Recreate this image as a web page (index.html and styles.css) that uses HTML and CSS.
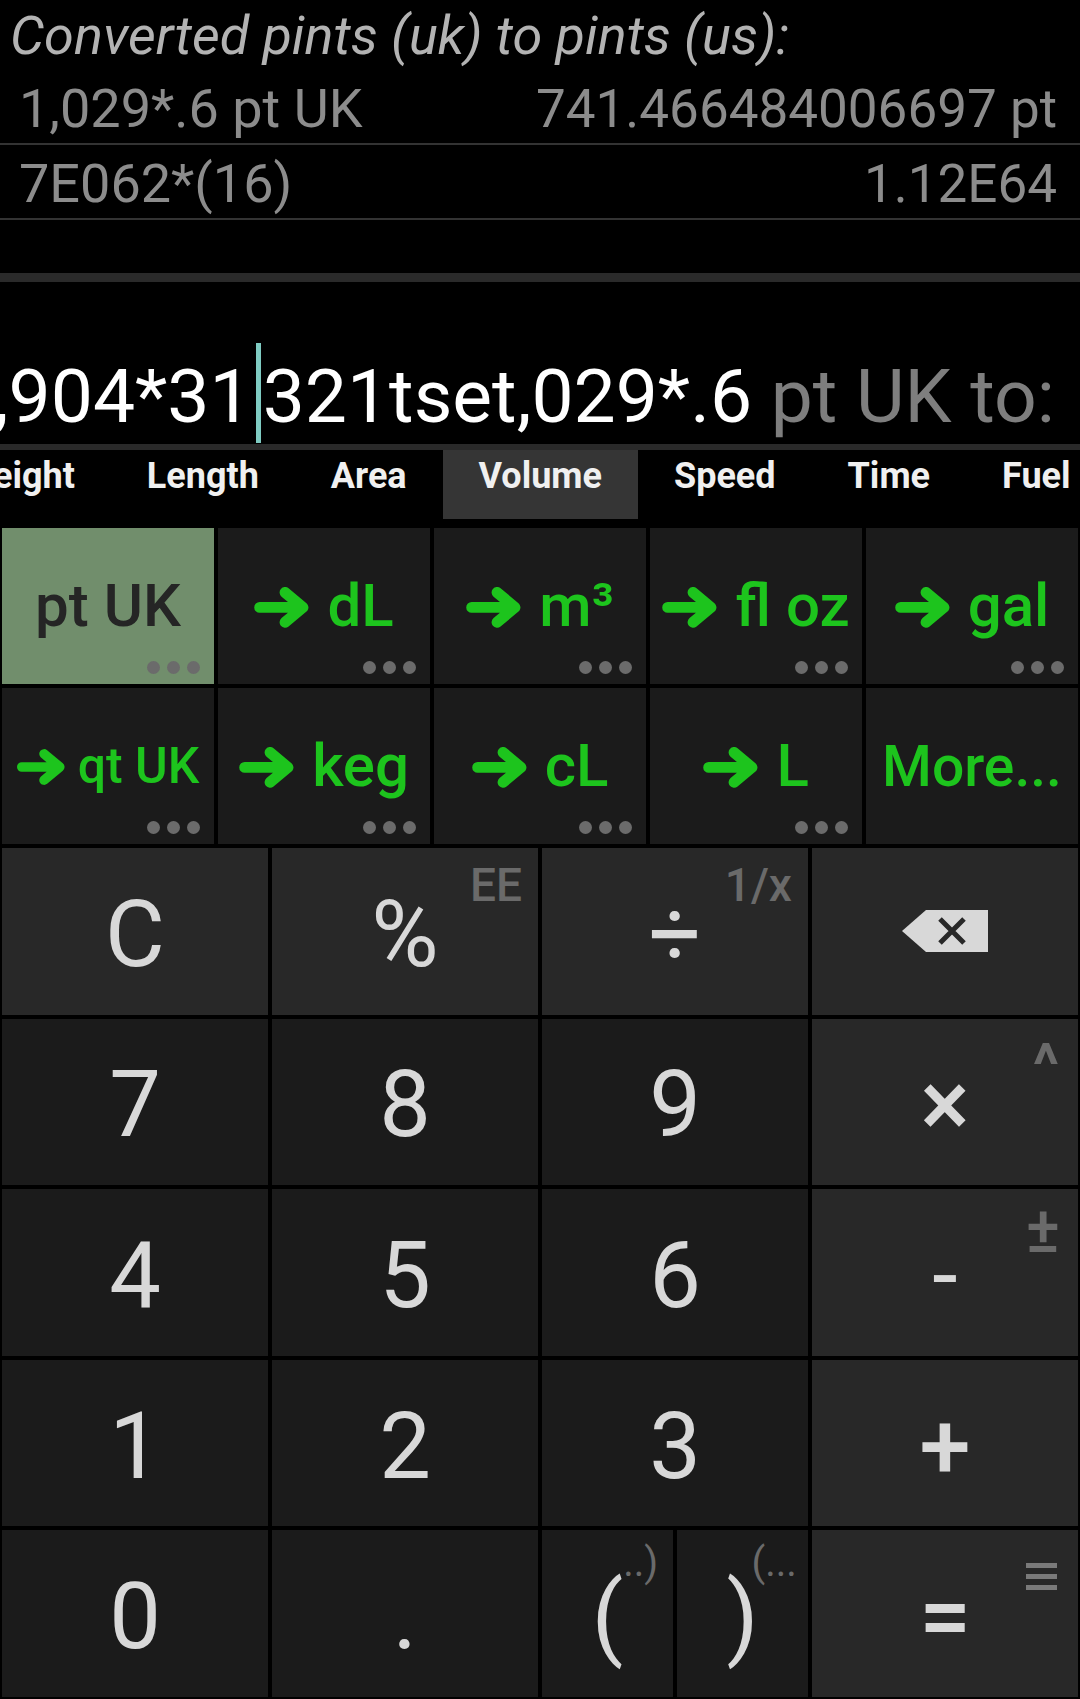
FILE: index.html
```html
<!DOCTYPE html>
<html lang="en">
<head>
<meta charset="utf-8">
<title>Unit converter calculator</title>
<link rel="stylesheet" href="styles.css">
</head>
<body>
<div class="app">
  <section class="history">
    <div class="hist-title">Converted pints (uk) to pints (us):</div>
    <div class="hist-row"><span>1,029*.6 pt UK</span><span class="hist-result">741.466484006697 pt</span></div>
    <div class="hist-row"><span>7E062*(16)</span><span class="hist-result">1.12E64</span></div>
    <div class="hist-spacer"></div>
  </section>
  <div class="bar bar-top"></div>
  <div class="input">
    <div class="input-line">,904*31<span class="caret"></span>321tset,029*.6 <span class="unit-hint">pt UK to:</span></div>
  </div>
  <div class="bar bar-bottom"></div>
  <nav class="tabs">
    <div class="tab-strip">
      <span class="tab">Weight</span>
      <span class="tab">Length</span>
      <span class="tab">Area</span>
      <span class="tab tab-active">Volume</span>
      <span class="tab">Speed</span>
      <span class="tab">Time</span>
      <span class="tab">Fuel Economy</span>
    </div>
  </nav>
  <div class="units">
    <div class="unit unit-sel"><span class="unit-label">pt UK</span><span class="dots"><i></i><i></i><i></i></span></div>
    <div class="unit"><span class="unit-label"><svg class="arrow" viewBox="0 0 55 41"><path d="M5.5 20.5H47M31 5.5L49 20.5L31 35.5"/></svg>dL</span><span class="dots"><i></i><i></i><i></i></span></div>
    <div class="unit"><span class="unit-label"><svg class="arrow" viewBox="0 0 55 41"><path d="M5.5 20.5H47M31 5.5L49 20.5L31 35.5"/></svg>m³</span><span class="dots"><i></i><i></i><i></i></span></div>
    <div class="unit"><span class="unit-label"><svg class="arrow" viewBox="0 0 55 41"><path d="M5.5 20.5H47M31 5.5L49 20.5L31 35.5"/></svg>fl oz</span><span class="dots"><i></i><i></i><i></i></span></div>
    <div class="unit"><span class="unit-label"><svg class="arrow" viewBox="0 0 55 41"><path d="M5.5 20.5H47M31 5.5L49 20.5L31 35.5"/></svg>gal</span><span class="dots"><i></i><i></i><i></i></span></div>
    <div class="unit"><span class="unit-label unit-small"><svg class="arrow" viewBox="0 0 55 41"><path d="M5.5 20.5H47M31 5.5L49 20.5L31 35.5"/></svg>qt UK</span><span class="dots"><i></i><i></i><i></i></span></div>
    <div class="unit"><span class="unit-label"><svg class="arrow" viewBox="0 0 55 41"><path d="M5.5 20.5H47M31 5.5L49 20.5L31 35.5"/></svg>keg</span><span class="dots"><i></i><i></i><i></i></span></div>
    <div class="unit"><span class="unit-label"><svg class="arrow" viewBox="0 0 55 41"><path d="M5.5 20.5H47M31 5.5L49 20.5L31 35.5"/></svg>cL</span><span class="dots"><i></i><i></i><i></i></span></div>
    <div class="unit"><span class="unit-label"><svg class="arrow" viewBox="0 0 55 41"><path d="M5.5 20.5H47M31 5.5L49 20.5L31 35.5"/></svg>L</span><span class="dots"><i></i><i></i><i></i></span></div>
    <div class="unit"><span class="unit-label unit-more">More...</span></div>
  </div>
  <div class="keypad">
    <div class="key op">C</div>
    <div class="key op">%<span class="alt alt-ee">EE</span></div>
    <div class="key op">÷<span class="alt alt-inv">1/x</span></div>
    <div class="key op"><svg class="bksp" viewBox="0 0 86 42"><path class="bksp-body" d="M24 0H86V42H24L0 21Z"/><path class="bksp-x" d="M38 9L62 33M62 9L38 33"/></svg></div>

    <div class="key">7</div>
    <div class="key">8</div>
    <div class="key">9</div>
    <div class="key op"><span class="sym">×</span><span class="alt alt-pow">^</span></div>

    <div class="key">4</div>
    <div class="key">5</div>
    <div class="key">6</div>
    <div class="key op">-<span class="alt alt-neg">±</span></div>

    <div class="key">1</div>
    <div class="key">2</div>
    <div class="key">3</div>
    <div class="key op"><span class="sym">+</span></div>

    <div class="key">0</div>
    <div class="key">.</div>
    <div class="key-split">
      <div class="key"><span class="paren">(<span class="paren-sup">..)</span></span></div>
      <div class="key"><span class="paren">)<span class="paren-sup paren-sup-r">(...</span></span></div>
    </div>
    <div class="key op"><span class="sym">=</span><svg class="alt-menu" viewBox="0 0 31 27"><rect x="0" y="0" width="31" height="5"/><rect x="0" y="11" width="31" height="5"/><rect x="0" y="22" width="31" height="5"/></svg></div>
  </div>
</div>
</body>
</html>
```

FILE: styles.css
```css
* {
  box-sizing: border-box;
  margin: 0;
  padding: 0;
}

html,
body {
  background: #000;
}

body {
  width: 1080px;
  height: 1699px;
  overflow: hidden;
  font-family: Roboto, "Noto Sans", "Liberation Sans", sans-serif;
}

.app {
  display: flex;
  flex-direction: column;
  width: 1080px;
  height: 1699px;
}

/* ---------- history ---------- */
.hist-title {
  height: 70px;
  padding: 3px 0 0 10px;
  font-size: 54px;
  line-height: 66px;
  font-style: italic;
  color: #b3b3b3;
  white-space: nowrap;
}

.hist-row {
  display: flex;
  justify-content: space-between;
  align-items: baseline;
  height: 75px;
  padding: 4px 23px 0 19px;
  font-size: 54px;
  line-height: 69px;
  color: #8c8c8c;
  border-bottom: 2px solid #333;
  white-space: nowrap;
}

.hist-result {
  font-size: 53px;
}

.hist-spacer {
  height: 53px;
}

.bar {
  background: #2a2a2a;
}

.bar-top {
  height: 9px;
}

.bar-bottom {
  height: 6px;
}

/* ---------- input ---------- */
.input {
  height: 162px;
  display: flex;
  justify-content: flex-end;
  align-items: flex-end;
  overflow: hidden;
  padding: 0 25px 1px 0;
}

.input-line {
  flex-shrink: 0;
  font-size: 75px;
  line-height: 1;
  color: #fff;
  white-space: nowrap;
}

.caret {
  display: inline-block;
  width: 5px;
  height: 100px;
  margin: 0 2px 0 4px;
  vertical-align: -21px;
  background: #7fcbc2;
}

.unit-hint {
  color: #7e7e7e;
}

/* ---------- tabs ---------- */
.tabs {
  height: 69px;
  overflow: hidden;
}

.tab-strip {
  display: flex;
  margin-left: -74px;
}

.tab {
  flex: none;
  height: 69px;
  padding: 1px 36px 0;
  font-size: 36px;
  line-height: 50px;
  font-weight: 700;
  color: #f0f0f0;
  white-space: nowrap;
}

.tab-active {
  background: #353535;
}

/* ---------- unit buttons ---------- */
.units {
  margin-top: 9px;
  display: grid;
  grid-template-columns: repeat(5, 1fr);
  grid-template-rows: 156px 156px;
  gap: 4px;
  padding: 0 2px;
}

.unit {
  position: relative;
  display: flex;
  align-items: center;
  justify-content: center;
  background: #1b1b1b;
  color: #1dc41d;
  font-size: 60px;
  font-weight: 500;
  line-height: 1;
  white-space: nowrap;
}

.unit-sel {
  background: #718e6c;
  color: #252525;
}

.unit-small {
  font-size: 50px;
}

.unit-more {
  font-size: 57px;
}

.arrow {
  width: 0.92em;
  height: 0.68em;
  margin-right: 0.3em;
  vertical-align: -0.03em;
}

.unit-small .arrow {
  width: 0.96em;
  height: 0.72em;
  margin-right: 0.26em;
}

.arrow path {
  fill: none;
  stroke: currentColor;
  stroke-width: 11;
  stroke-linecap: round;
  stroke-linejoin: round;
}

.dots {
  position: absolute;
  right: 14px;
  bottom: 10px;
  display: flex;
  gap: 7px;
}

.dots i {
  display: block;
  width: 13px;
  height: 13px;
  border-radius: 50%;
  background: #6b6b6b;
}

/* ---------- keypad ---------- */
.keypad {
  flex: 1;
  margin-top: 4px;
  display: grid;
  grid-template-columns: repeat(4, 1fr);
  grid-template-rows: repeat(5, 1fr);
  gap: 4px;
  padding: 0 2px 2px;
}

.key {
  position: relative;
  display: flex;
  align-items: center;
  justify-content: center;
  padding-top: 7px;
  background: #1b1b1b;
  color: #d8d8d8;
  font-size: 92px;
  line-height: 1;
}

.key.op {
  background: #282828;
}

.key-split {
  display: grid;
  grid-template-columns: 1fr 1fr;
  gap: 4px;
}

.sym {
  font-weight: 500;
}

.alt {
  position: absolute;
  top: 14px;
  right: 16px;
  font-size: 46px;
  font-weight: 500;
  color: #6a6a6a;
}

.alt-pow {
  top: 16px;
  right: 19px;
  font-size: 60px;
  font-weight: 700;
}

.alt-neg {
  top: 10px;
  right: 18px;
  font-size: 64px;
}

.alt-menu {
  position: absolute;
  top: 33px;
  right: 21px;
  width: 31px;
  height: 27px;
  fill: #7a7a7a;
}

.bksp {
  width: 86px;
  height: 42px;
  margin-top: -7px;
}

.bksp-body {
  fill: #d8d8d8;
}

.bksp-x {
  fill: none;
  stroke: #282828;
  stroke-width: 5;
}

.paren {
  position: relative;
}

.paren-sup {
  position: absolute;
  left: 100%;
  top: -28px;
  font-size: 40px;
  color: #6a6a6a;
}

.paren-sup-r {
  left: calc(100% - 7px);
}
```
